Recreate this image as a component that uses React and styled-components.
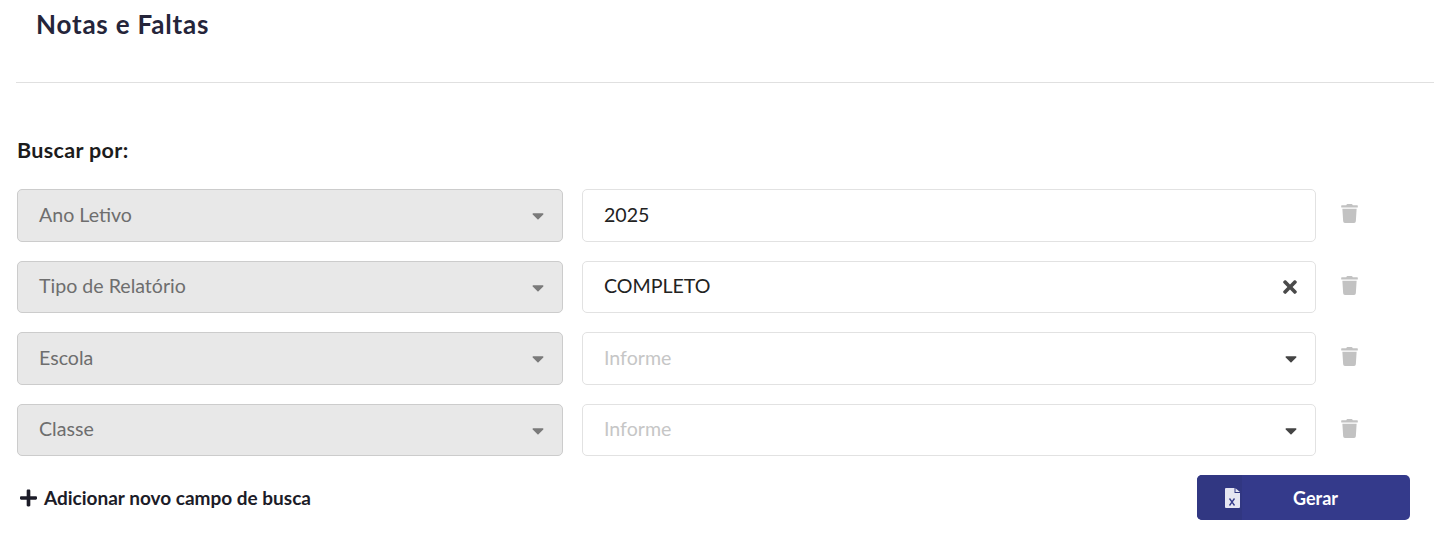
import React from "react";
import styled, { createGlobalStyle } from "styled-components";
import { FaTrash, FaTimes, FaPlus, FaCaretDown } from "react-icons/fa";

const Global = createGlobalStyle`
  html, body { margin: 0; padding: 0; background: #fff; }
  body { font-family: "Lato", "Noto Sans", sans-serif; }
`;

const Page = styled.div`
  width: 1434px;
  height: 548px;
  overflow: hidden;
  padding-left: 16px;
  box-sizing: border-box;
`;

const Header = styled.header`
  height: 83px;
  box-sizing: border-box;
  padding: 8px 0 0 20px;
  border-bottom: 1px solid #e0e0e0;
`;

const Title = styled.h1`
  margin: 0;
  font-size: 26px;
  line-height: 32px;
  font-weight: 700;
  letter-spacing: 0.8px;
  color: #25253a;
`;

const Form = styled.section`
  padding: 54px 0 0 1px;
`;

const Label = styled.h2`
  margin: 0 0 25px;
  font-size: 21.5px;
  line-height: 27px;
  font-weight: 700;
  letter-spacing: 0.35px;
  color: #1c1c1c;
`;

const Rows = styled.div`
  display: flex;
  flex-direction: column;
  gap: 19px;
`;

const Row = styled.div`
  display: grid;
  grid-template-columns: 546px 734px 86px;
  column-gap: 19px;
  height: 52.5px;
  & > :last-child { margin-left: -19px; width: 66px; }
`;

const Field = styled.div`
  display: flex;
  align-items: center;
  justify-content: space-between;
  box-sizing: border-box;
  padding: 0 18px 2px 21px;
  border-radius: 5px;
  border: 1px solid ${(p) => (p.$locked ? "#cccccc" : "#e2e2e2")};
  background: ${(p) => (p.$locked ? "#e8e8e8" : "#fff")};
  font-size: 19.6px;
  color: ${(p) => (p.$locked ? "#6e6e6e" : "#222")};
`;

const Placeholder = styled.span`
  color: #c6c6c6;
`;

const Caret = styled(FaCaretDown)`
  width: 12px;
  height: 19px;
  margin-top: 3px;
  color: ${(p) => (p.$dark ? "#444" : "#7a7a7a")};
`;

const Clear = styled(FaTimes)`
  width: 14px;
  height: 20px;
  margin-top: 2px;
  color: #4a4a4a;
`;

const TrashCell = styled.div`
  display: flex;
  align-items: center;
  justify-content: center;
`;

const Trash = styled(FaTrash)`
  width: 17px;
  height: 19px;
  margin-bottom: 3px;
  color: #c2c2c2;
`;

const Footer = styled.div`
  display: flex;
  align-items: center;
  justify-content: space-between;
  width: 1393px;
  height: 45px;
  margin-top: 19px;
`;

const AddLink = styled.button`
  display: flex;
  align-items: center;
  gap: 7px;
  padding: 0 0 0 3px;
  border: 0;
  background: none;
  font: 700 19px "Lato", sans-serif;
  color: #1c1c28;
`;

const PlusIcon = styled(FaPlus)`
  width: 17px;
  height: 20px;
`;

const Generate = styled.button`
  display: flex;
  align-items: stretch;
  width: 213px;
  height: 45px;
  padding: 0;
  border: 0;
  border-radius: 5px;
  overflow: hidden;
  background: #343a8b;
  color: #fff;
  font: 700 18px "Lato", sans-serif;
`;

const IconZone = styled.span`
  display: flex;
  align-items: center;
  justify-content: flex-start;
  width: 45px;
  padding-left: 28px;
  box-sizing: border-box;
  background: #313782;
`;

const GenerateText = styled.span`
  flex: 1;
  display: flex;
  align-items: center;
  justify-content: center;
  padding-right: 21px;
  box-sizing: border-box;
`;

const ExcelIcon = () => (
  <svg width="15" height="20" viewBox="0 0 15 20" aria-hidden="true">
    <path d="M1 0h8.5v5H15v14a1 1 0 0 1-1 1H1a1 1 0 0 1-1-1V1a1 1 0 0 1 1-1z" fill="#e6e6f2" />
    <path d="M10.5 0.2 15 4h-4.5z" fill="#e6e6f2" />
    <path d="M4.5 10.5l5 7M9.5 10.5l-5 7" stroke="#343a8b" strokeWidth="1.3" fill="none" />
  </svg>
);

const rows = [
  { name: "Ano Letivo", value: "2025" },
  { name: "Tipo de Relatório", value: "COMPLETO", clear: true },
  { name: "Escola", placeholder: "Informe" },
  { name: "Classe", placeholder: "Informe" },
];

export default function App() {
  return (
    <Page>
      <Global />
      <Header>
        <Title>Notas e Faltas</Title>
      </Header>
      <Form>
        <Label>Buscar por:</Label>
        <Rows>
          {rows.map((r) => (
            <Row key={r.name}>
              <Field $locked>
                <span>{r.name}</span>
                <Caret />
              </Field>
              <Field>
                {r.value ? <span>{r.value}</span> : <Placeholder>{r.placeholder}</Placeholder>}
                {r.clear && <Clear />}
                {r.placeholder && <Caret $dark />}
              </Field>
              <TrashCell>
                <Trash />
              </TrashCell>
            </Row>
          ))}
        </Rows>
        <Footer>
          <AddLink>
            <PlusIcon />
            Adicionar novo campo de busca
          </AddLink>
          <Generate>
            <IconZone>
              <ExcelIcon />
            </IconZone>
            <GenerateText>Gerar</GenerateText>
          </Generate>
        </Footer>
      </Form>
    </Page>
  );
}
